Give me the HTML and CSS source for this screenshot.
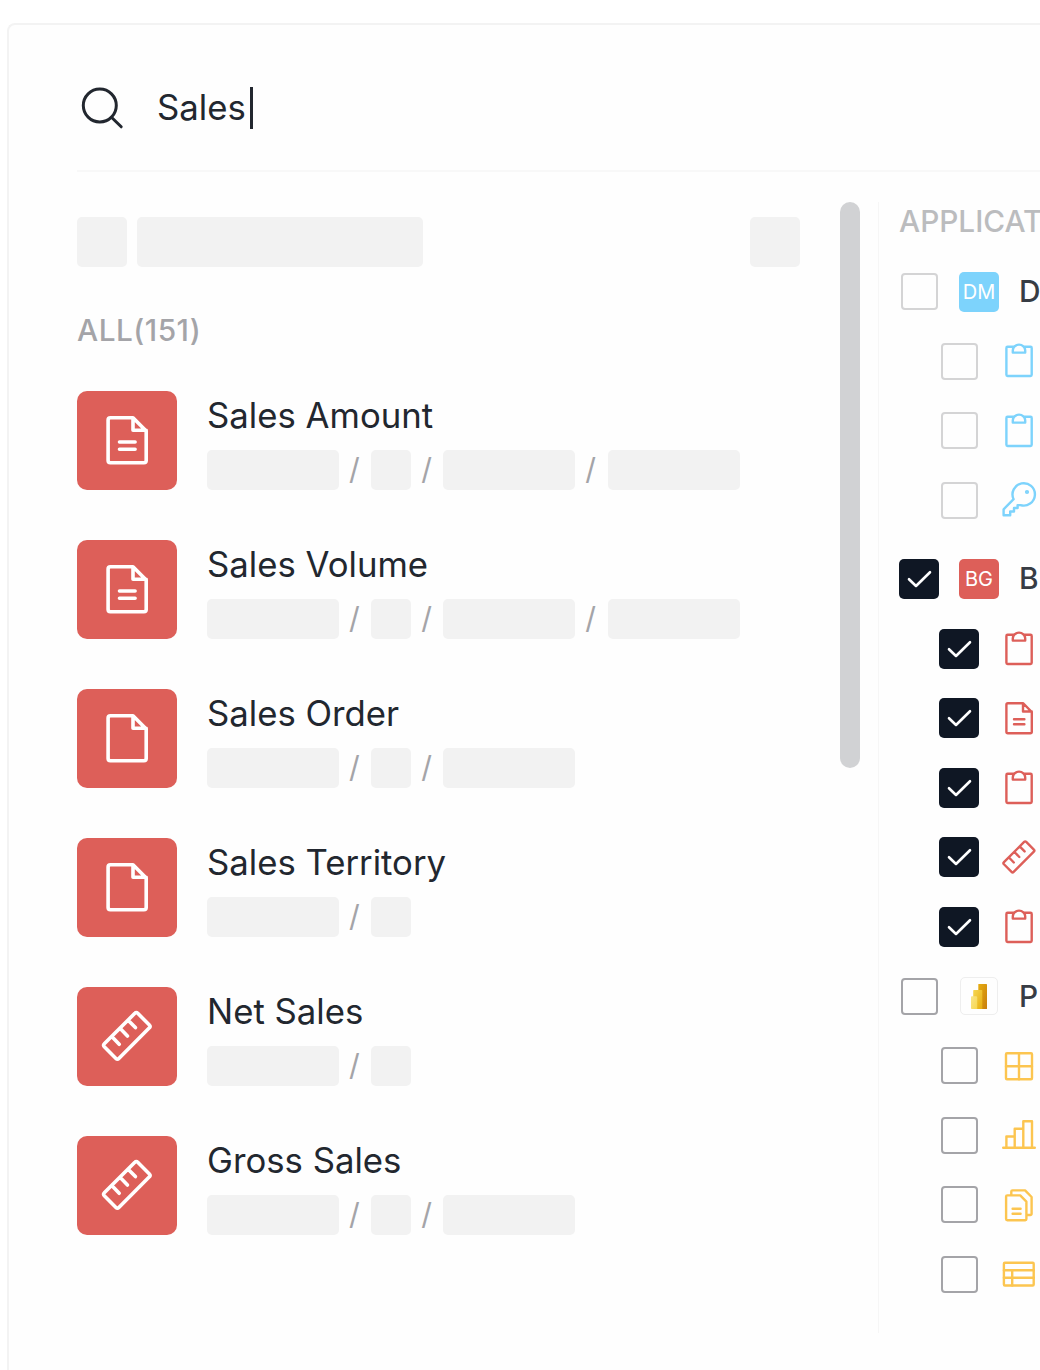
FILE: index.html
```
<!DOCTYPE html>
<html lang="en">
<head>
  <meta charset="UTF-8" />
  <meta name="viewport" content="width=device-width, initial-scale=1.0" />
  <title>Search</title>
  <link rel="stylesheet" href="styles.css">
</head>
<body>
  <svg class="sprite">
    <symbol id="doc" viewBox="0 0 40 40">
      <path d="M24 5.2H8.9a1.5 1.5 0 0 0-1.5 1.5v27a1.5 1.5 0 0 0 1.5 1.5h22.4a1.5 1.5 0 0 0 1.5-1.5V14L24 5.2v8.3h8.8M15 21.3h10.4M15 26.2h10.4"/>
    </symbol>
    <symbol id="page" viewBox="0 0 40 40">
      <path d="M24 5.2H8.9a1.5 1.5 0 0 0-1.5 1.5v27a1.5 1.5 0 0 0 1.5 1.5h22.4a1.5 1.5 0 0 0 1.5-1.5V14L24 5.2v8.3h8.8"/>
    </symbol>
    <symbol id="ruler" viewBox="0 0 40 40">
      <path d="M4.7 25.4 25.4 4.7a1.1 1.1 0 0 1 1.6 0l8.1 8.1a1.1 1.1 0 0 1 0 1.6L14.4 35.1a1.1 1.1 0 0 1-1.6 0l-8.1-8.1a1.1 1.1 0 0 1 0-1.6zM10 20.5l4.8 5M15.5 15l4.8 5M20.9 9.6l4.7 4.8"/>
    </symbol>
    <symbol id="clip" viewBox="0 0 40 40">
      <path d="M14.5 5.7H8.6a1.2 1.2 0 0 0-1.2 1.2v26.9a1.2 1.2 0 0 0 1.2 1.2h22.9a1.2 1.2 0 0 0 1.2-1.2V6.9a1.2 1.2 0 0 0-1.2-1.2h-5.9M13.8 11.6V9.4a6.2 5.8 0 0 1 12.4 0v2.2z"/>
    </symbol>
    <symbol id="key" viewBox="0 0 40 40">
      <path d="M14.6 19.2 4.6 29.3v5.9h6.6v-3.7H15V28h3.6v-2.9h2.8a11.2 11.2 0 1 0-6.8-5.9z"/>
      <circle cx="28" cy="12" r=".9"/>
    </symbol>
    <symbol id="check" viewBox="0 0 40 40">
      <path d="M10 20.2 17 27 31 13.2"/>
    </symbol>
    <symbol id="grid" viewBox="0 0 40 40">
      <rect x="7" y="7.2" width="26" height="26" rx="1"/>
      <path d="M20 7.2v26M7 20.2h26"/>
    </symbol>
    <symbol id="chart" viewBox="0 0 40 40">
      <path d="M4.2 32.7h31.6M7.4 32.7V21.5h8.3M15.7 32.7v-19h8.6M24.3 32.7V6.2H33v26.5"/>
    </symbol>
    <symbol id="pages" viewBox="0 0 40 40">
      <path d="M21.2 10.4H8.3a1.2 1.2 0 0 0-1.2 1.2v22.5a1.2 1.2 0 0 0 1.2 1.2h17.9a1.2 1.2 0 0 0 1.2-1.2V16.6zM12.3 10.4V6.6a1.2 1.2 0 0 1 1.2-1.2h12.6l6.5 6.6v16.8a1.2 1.2 0 0 1-1.2 1.2h-4M13.6 23.8h8M13.6 28.8h8"/>
    </symbol>
    <symbol id="table" viewBox="0 0 40 40">
      <rect x="4.9" y="8.7" width="29.8" height="22.8" rx="1"/>
      <path d="M4.9 16.2h29.8M4.9 23.7h29.8M13.2 16.2v15.3"/>
    </symbol>
  </svg>

  <div class="panel">
    <div class="search">
      <svg class="search-icon" viewBox="0 0 50 50"><circle cx="22.8" cy="22.5" r="16.5"/><path d="m34.7 34.5 9.5 9.3"/></svg>
      <span class="query">Sales</span><span class="caret"></span>
    </div>

    <div class="content">
      <div class="results">
        <div class="toolbar">
          <span class="sk sq"></span>
          <span class="sk bar"></span>
          <span class="sk sq end"></span>
        </div>
        <div class="count">ALL(151)</div>

        <div class="item">
          <div class="tile"><svg><use href="#doc"/></svg></div>
          <div class="info">
            <div class="name">Sales Amount</div>
            <div class="path"><i class="sk long"></i><b>/</b><i class="sk short"></i><b>/</b><i class="sk long"></i><b>/</b><i class="sk long"></i></div>
          </div>
        </div>
        <div class="item">
          <div class="tile"><svg><use href="#doc"/></svg></div>
          <div class="info">
            <div class="name">Sales Volume</div>
            <div class="path"><i class="sk long"></i><b>/</b><i class="sk short"></i><b>/</b><i class="sk long"></i><b>/</b><i class="sk long"></i></div>
          </div>
        </div>
        <div class="item">
          <div class="tile"><svg><use href="#page"/></svg></div>
          <div class="info">
            <div class="name">Sales Order</div>
            <div class="path"><i class="sk long"></i><b>/</b><i class="sk short"></i><b>/</b><i class="sk long"></i></div>
          </div>
        </div>
        <div class="item">
          <div class="tile"><svg><use href="#page"/></svg></div>
          <div class="info">
            <div class="name">Sales Territory</div>
            <div class="path"><i class="sk long"></i><b>/</b><i class="sk short"></i></div>
          </div>
        </div>
        <div class="item">
          <div class="tile"><svg><use href="#ruler"/></svg></div>
          <div class="info">
            <div class="name">Net Sales</div>
            <div class="path"><i class="sk long"></i><b>/</b><i class="sk short"></i></div>
          </div>
        </div>
        <div class="item">
          <div class="tile"><svg><use href="#ruler"/></svg></div>
          <div class="info">
            <div class="name">Gross Sales</div>
            <div class="path"><i class="sk long"></i><b>/</b><i class="sk short"></i><b>/</b><i class="sk long"></i></div>
          </div>
        </div>
      </div>

      <div class="scrollbar"></div>

      <div class="filters">
        <div class="filter-title">APPLICAT</div>

        <div class="group blue">
          <div class="row"><span class="box"></span><span class="badge">DM</span><span class="app">D</span></div>
          <div class="row child"><span class="box"></span><svg class="icon"><use href="#clip"/></svg></div>
          <div class="row child"><span class="box"></span><svg class="icon"><use href="#clip"/></svg></div>
          <div class="row child"><span class="box"></span><svg class="icon"><use href="#key"/></svg></div>
        </div>

        <div class="group red">
          <div class="row"><span class="box on"><svg><use href="#check"/></svg></span><span class="badge">BG</span><span class="app">B</span></div>
          <div class="row child"><span class="box on"><svg><use href="#check"/></svg></span><svg class="icon"><use href="#clip"/></svg></div>
          <div class="row child"><span class="box on"><svg><use href="#check"/></svg></span><svg class="icon"><use href="#doc"/></svg></div>
          <div class="row child"><span class="box on"><svg><use href="#check"/></svg></span><svg class="icon"><use href="#clip"/></svg></div>
          <div class="row child"><span class="box on"><svg><use href="#check"/></svg></span><svg class="icon"><use href="#ruler"/></svg></div>
          <div class="row child"><span class="box on"><svg><use href="#check"/></svg></span><svg class="icon"><use href="#clip"/></svg></div>
        </div>

        <div class="group yellow">
          <div class="row">
            <span class="box"></span>
            <span class="badge logo">
              <svg viewBox="0 0 40 40">
                <defs>
                  <linearGradient id="g1" x1="0" y1="0" x2="1" y2="1"><stop offset="0" stop-color="#e6ad10"/><stop offset="1" stop-color="#c87e0e"/></linearGradient>
                  <linearGradient id="g2" x1="0" y1="0" x2="1" y2="1"><stop offset="0" stop-color="#f6d751"/><stop offset="1" stop-color="#e6ad10"/></linearGradient>
                  <linearGradient id="g3" x1="0" y1="0" x2="1" y2="1"><stop offset="0" stop-color="#f9e589"/><stop offset="1" stop-color="#f6d751"/></linearGradient>
                </defs>
                <rect x="19.3" y="8" width="8.7" height="25" rx=".6" fill="url(#g1)"/>
                <path d="M14.9 14.1h7.7a.7.7 0 0 1 .7.7V33h-9.1V14.8a.7.7 0 0 1 .7-.7z" fill="url(#g2)"/>
                <path d="M12.7 20.3h4.5a1 1 0 0 1 1 1V33h-5.5a.7.7 0 0 1-.7-.7V21a.7.7 0 0 1 .7-.7z" fill="url(#g3)"/>
              </svg>
            </span>
            <span class="app">P</span>
          </div>
          <div class="row child"><span class="box"></span><svg class="icon"><use href="#grid"/></svg></div>
          <div class="row child"><span class="box"></span><svg class="icon"><use href="#chart"/></svg></div>
          <div class="row child"><span class="box"></span><svg class="icon"><use href="#pages"/></svg></div>
          <div class="row child"><span class="box"></span><svg class="icon"><use href="#table"/></svg></div>
        </div>
      </div>
    </div>
  </div>
</body>
</html>
```
FILE: styles.css
```
* {
  box-sizing: border-box;
}
body {
  margin: 0;
  height: 1370px;
  padding: 23px 0 0 7px;
  overflow: hidden;
  background: #fff;
  color: #22272f;
  font-family: Inter, sans-serif;
}
svg {
  display: block;
  fill: none;
  stroke: currentColor;
  stroke-width: 2.4;
  stroke-linecap: round;
  stroke-linejoin: round;
}
.sprite {
  display: none;
}
.panel {
  height: 1347px;
  padding-left: 68px;
  overflow: hidden;
  background: #fefefe;
  border: 2px solid #f3f3f3;
  border-right: 0;
  border-bottom: 0;
  border-top-left-radius: 8px;
}
.search {
  display: flex;
  align-items: center;
  height: 147px;
  padding-top: 20px;
  border-bottom: 2px solid #f8f8f8;
}
.search-icon {
  width: 50px;
  height: 50px;
  stroke-width: 3;
}
.query {
  margin: -1px 0 0 30px;
  font-size: 34.75px;
}
.caret {
  width: 2.5px;
  height: 42px;
  margin-left: 4.5px;
  background: #22272f;
}
.content {
  display: flex;
  align-items: flex-start;
}
.results {
  flex-shrink: 0;
  width: 723px;
  padding-top: 45px;
}
.sk {
  display: block;
  background: #f2f2f2;
  border-radius: 5px;
}
.toolbar {
  display: flex;
  gap: 10px;
}
.sq {
  width: 50px;
  height: 50px;
}
.bar {
  width: 286.4px;
  height: 50px;
}
.end {
  margin-left: auto;
}
.count {
  margin: 43px 0 40.8px;
  color: #a4a4a8;
  font-size: 29.8px;
  font-weight: 500;
  letter-spacing: 0.5px;
  line-height: 40px;
}
.item {
  display: flex;
  gap: 30px;
  margin-bottom: 49.6px;
}
.tile {
  display: flex;
  align-items: center;
  justify-content: center;
  width: 100px;
  height: 99.4px;
  border-radius: 10px;
  background: #dd5f59;
  color: #fff;
}
.tile svg {
  width: 60px;
  height: 60px;
}
.name {
  margin-bottom: 11.2px;
  font-size: 34.72px;
  line-height: 48.5px;
}
.path {
  display: flex;
  align-items: center;
}
.path b {
  width: 32.2px;
  padding-right: 1.5px;
  color: #a4a4a8;
  font-size: 29.8px;
  font-weight: 400;
  line-height: 39.7px;
  text-align: center;
}
.long {
  width: 132px;
  height: 39.7px;
}
.short {
  width: 40px;
  height: 39.7px;
}
.scrollbar {
  flex-shrink: 0;
  width: 20px;
  height: 566px;
  margin: 30px 0 0 39.5px;
  border-radius: 10px;
  background: #d1d2d4;
}
.filters {
  flex: 1;
  min-width: 0;
  height: 1131px;
  margin: 30px 0 0 18px;
  padding-left: 20.5px;
  overflow: hidden;
  border-left: 1.5px solid #f6f6f6;
}
.filter-title {
  margin-bottom: 30.7px;
  color: #bbbcbe;
  font-size: 29.8px;
  font-weight: 500;
  line-height: 39px;
}
.group {
  margin-bottom: 39px;
}
.red {
  margin-bottom: 29.6px;
}
.row {
  display: flex;
  align-items: center;
  gap: 20px;
  height: 40px;
  margin-bottom: 29.5px;
}
.row:last-child {
  margin-bottom: 0;
}
.child {
  padding-left: 40px;
}
.box {
  flex-shrink: 0;
  width: 37px;
  height: 37px;
  margin: 1.5px 1px 1.5px 2px;
  border: 2px solid #a4a4a8;
  border-radius: 4px;
}
.blue .box {
  border-color: #d4d4d5;
}
.box.on {
  width: 40px;
  height: 40px;
  margin: 0;
  border: 0;
  border-radius: 5px;
  background: #0f1724;
  color: #fff;
}
.box svg {
  width: 40px;
  height: 40px;
  stroke-width: 2.6;
}
.icon {
  flex-shrink: 0;
  width: 40px;
  height: 40px;
}
.badge {
  flex-shrink: 0;
  width: 40px;
  height: 40px;
  border-radius: 5px;
  color: #fff;
  font-size: 20px;
  line-height: 40px;
  text-align: center;
}
.app {
  margin-top: -1.5px;
  color: #373c44;
  font-size: 29.8px;
  font-weight: 500;
}
.blue {
  color: #7dd3fc;
}
.blue .badge {
  background: #7dd3fc;
}
.red {
  color: #dd5f59;
}
.red .badge {
  background: #dd5f59;
}
.yellow {
  color: #fcc550;
}
.logo {
  width: 38px;
  height: 38px;
  margin: 1px;
  border: 1px solid #eee;
}
.logo svg {
  width: 40px;
  height: 40px;
  margin: -2px;
  stroke: none;
}
```
